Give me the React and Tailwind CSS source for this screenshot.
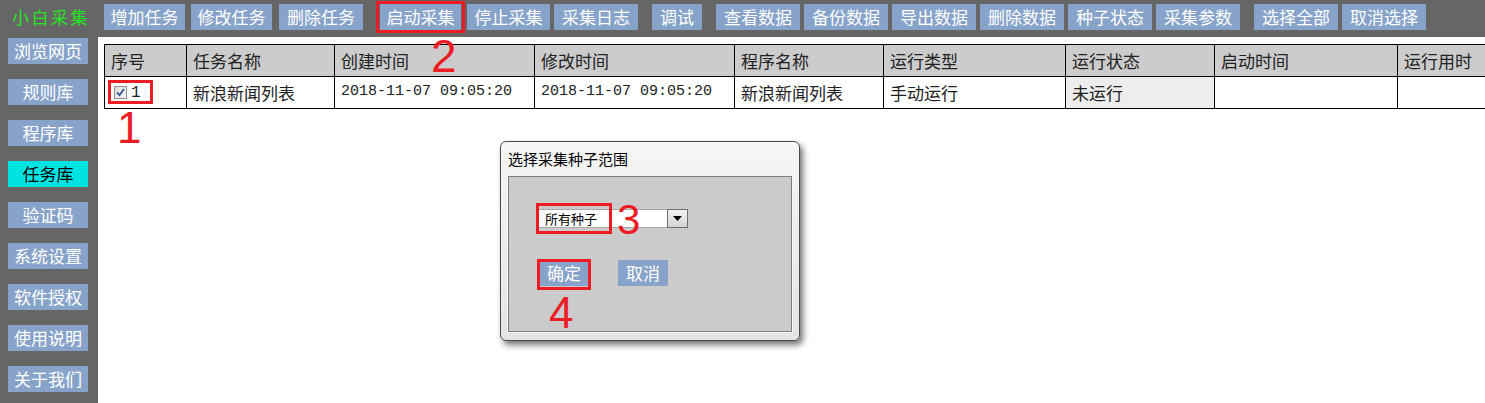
import React from "react";

const CJK = { fontFamily: '"Noto Sans CJK SC", "Noto Sans", sans-serif' };
const MONO = { fontFamily: '"Liberation Mono", "Noto Sans CJK SC", monospace' };
const DIGIT = { fontFamily: '"Liberation Sans", Arial, sans-serif' };

const topButtons = [
  { t: "增加任务", c: "ml-0 w-[81px]" },
  { t: "修改任务", c: "ml-[6px] w-[81px]" },
  { t: "删除任务", c: "ml-[7px] w-[84px]" },
  { t: "启动采集", c: "", red: true },
  { t: "停止采集", c: "ml-[2px] w-[83px]" },
  { t: "采集日志", c: "ml-[4px] w-[84px]" },
  { t: "调试", c: "ml-[14px] w-[50px]" },
  { t: "查看数据", c: "ml-[14px] w-[84px]" },
  { t: "备份数据", c: "ml-[4px] w-[84px]" },
  { t: "导出数据", c: "ml-[4px] w-[84px]" },
  { t: "删除数据", c: "ml-[4px] w-[84px]" },
  { t: "种子状态", c: "ml-[4px] w-[84px]" },
  { t: "采集参数", c: "ml-[4px] w-[84px]" },
  { t: "选择全部", c: "ml-[14px] w-[84px]" },
  { t: "取消选择", c: "ml-[4px] w-[84px]" },
];

const sideButtons = ["浏览网页", "规则库", "程序库", "任务库", "验证码", "系统设置", "软件授权", "使用说明", "关于我们"];

const cols = [
  { h: "序号", w: "w-[82px]" },
  { h: "任务名称", w: "w-[148px]" },
  { h: "创建时间", w: "w-[200px]" },
  { h: "修改时间", w: "w-[200px]" },
  { h: "程序名称", w: "w-[149px]" },
  { h: "运行类型", w: "w-[182px]" },
  { h: "运行状态", w: "w-[149px]" },
  { h: "启动时间", w: "w-[183px]" },
  { h: "运行用时", w: "w-[150px]" },
];

function TopBtn({ t, c }) {
  return (
    <div className={`${c} h-[26px] leading-[26px] bg-[#87a3c9] text-white text-[17px] text-center shrink-0`}>
      {t}
    </div>
  );
}

function Checkbox() {
  return (
    <div className="w-[13px] h-[13px] border border-[#8e8f8f] bg-gradient-to-br from-[#dcdcdc] to-[#f6f6f6] flex items-center justify-center shrink-0">
      <svg width="9" height="9" viewBox="0 0 9 9">
        <path d="M1 4.5 L3.5 7.2 L8 1" fill="none" stroke="#2a4f8e" strokeWidth="1.7" />
      </svg>
    </div>
  );
}

function Cell({ w, children, className = "" }) {
  return (
    <div className={`${w} shrink-0 border-l border-black h-full flex items-center pl-[6px] ${className}`}>
      {children}
    </div>
  );
}

export default function App() {
  const body = [
    <div key="a" className="flex items-center pl-[3px]">
      <Checkbox />
      <span className="ml-[4px] text-[16px]" style={MONO}>1</span>
    </div>,
    <span key="b">新浪新闻列表</span>,
    <span key="c" className="text-[15px]" style={MONO}>2018-11-07 09:05:20</span>,
    <span key="d" className="text-[15px]" style={MONO}>2018-11-07 09:05:20</span>,
    <span key="e">新浪新闻列表</span>,
    <span key="f">手动运行</span>,
    <span key="g">未运行</span>,
    null,
    null,
  ];

  return (
    <div className="relative w-[1485px] h-[403px] bg-[#666666] flex flex-col overflow-hidden" style={CJK}>
      {/* top bar */}
      <div className="h-[37px] shrink-0 flex items-start pt-[4px]">
        <div className="ml-[12px] w-[92px] h-[26px] leading-[26px] text-[17px] tracking-[2.5px] text-[#22e622] shrink-0">
          小白采集
        </div>
        {topButtons.map((b) =>
          b.red ? (
            <div key={b.t} className="ml-[13px] -mt-[3px] border-[3px] border-[#ed1c24] px-[1px] shrink-0">
              <TopBtn t={b.t} c="w-[81px]" />
            </div>
          ) : (
            <TopBtn key={b.t} t={b.t} c={b.c} />
          )
        )}
      </div>

      <div className="flex flex-1 min-h-0">
        {/* sidebar */}
        <div className="w-[98px] shrink-0 flex flex-col gap-[15px] pt-[1px] pl-[8px]">
          {sideButtons.map((s) => (
            <div
              key={s}
              className={`w-[80px] h-[26px] leading-[26px] text-center text-[17px] ${
                s === "任务库" ? "bg-[#00e3e3] text-black" : "bg-[#87a3c9] text-white"
              }`}
            >
              {s}
            </div>
          ))}
        </div>

        {/* main panel */}
        <div className="flex-1 min-w-0 bg-white overflow-hidden pt-[7px] pl-[6px]">
          <div className="w-max text-[17px] text-[#222]">
            <div className="flex h-[33px] border-t border-b border-black bg-[#cccccc]">
              {cols.map((c) => (
                <Cell key={c.h} w={c.w}>{c.h}</Cell>
              ))}
            </div>
            <div className="flex h-[32px] border-b border-black bg-white">
              {cols.map((c, i) => (
                <Cell key={c.h} w={c.w} className={i === 6 ? "bg-[#ededed]" : ""}>
                  {body[i]}
                </Cell>
              ))}
            </div>
          </div>
        </div>
      </div>

      {/* annotation boxes */}
      <div className="absolute left-[108px] top-[80px] w-[45px] h-[24px] border-[3px] border-[#ed1c24]" />

      {/* dialog */}
      <div className="absolute left-[500px] top-[141px] w-[300px] h-[200px] rounded-[6px] border border-[#4a4a4a] bg-gradient-to-b from-[#f6f6f6] to-[#e4e4e4] shadow-[3px_4px_6px_rgba(0,0,0,0.55)] flex flex-col pl-[7px] pr-[7px] pb-[8px]">
        <div className="h-[34px] shrink-0 pt-[8px] text-[15px] leading-[18px] text-black">选择采集种子范围</div>
        <div className="relative flex-1 border border-[#7d7d7d] bg-[#cbcbcb] shadow-[0_0_0_1px_#f8f8f8] pt-[32px] pl-[29px]">
          <div className="w-[150px] h-[19px] bg-white border border-[#a9a9a9] flex items-center">
            <span className="pl-[6px] text-[13px] leading-[13px] text-black flex-1">所有种子</span>
            <div className="w-[21px] h-[19px] -mr-[1px] border border-[#707070] bg-gradient-to-b from-[#f2f2f2] to-[#d4d4d4] flex items-center justify-center">
              <svg width="9" height="5" viewBox="0 0 9 5">
                <path d="M0 0 L9 0 L4.5 5 Z" fill="#000" />
              </svg>
            </div>
          </div>
          <div className="flex mt-[32px] ml-[2px]">
            <div className="w-[48px] h-[26px] leading-[26px] text-center bg-[#87a3c9] text-white text-[17px]">确定</div>
            <div className="ml-[30px] w-[50px] h-[26px] leading-[26px] text-center bg-[#87a3c9] text-white text-[17px]">取消</div>
          </div>
        </div>
      </div>

      <div className="absolute left-[536px] top-[203px] w-[76px] h-[31px] border-[3px] border-[#ed1c24]" />
      <div className="absolute left-[537px] top-[259px] w-[54px] h-[31px] border-[3px] border-[#ed1c24]" />

      {/* annotation digits */}
      <div className="absolute left-[117px] top-[106px] text-[44px] leading-[44px] text-[#ed1c24]" style={DIGIT}>1</div>
      <div className="absolute left-[431px] top-[33px] text-[46px] leading-[46px] text-[#ed1c24]" style={DIGIT}>2</div>
      <div className="absolute left-[617px] top-[199px] text-[42px] leading-[42px] text-[#ed1c24]" style={DIGIT}>3</div>
      <div className="absolute left-[549px] top-[291px] text-[44px] leading-[44px] text-[#ed1c24]" style={DIGIT}>4</div>
    </div>
  );
}
